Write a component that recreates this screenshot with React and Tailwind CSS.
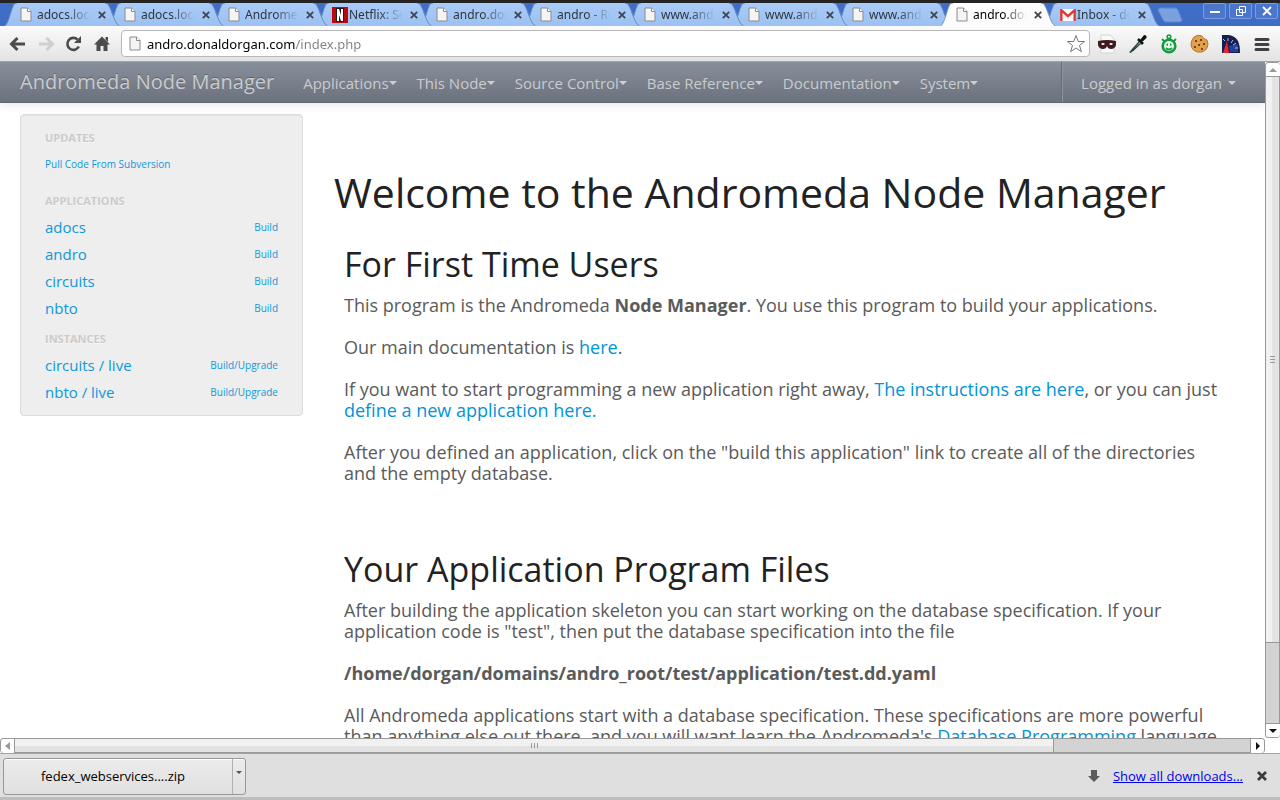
const tabs = [
  { title: 'adocs.localhost', icon: 'page', z: 'z-[11]' },
  { title: 'adocs.localhost', icon: 'page', z: 'z-[10]' },
  { title: 'Andromeda Node', icon: 'page', z: 'z-[9]' },
  { title: 'Netflix: Search', icon: 'netflix', z: 'z-[8]' },
  { title: 'andro.donaldorgan', icon: 'page', z: 'z-[7]' },
  { title: 'andro - Redmine', icon: 'page', z: 'z-[6]' },
  { title: 'www.andromeda', icon: 'page', z: 'z-[5]' },
  { title: 'www.andromeda', icon: 'page', z: 'z-[4]' },
  { title: 'www.andromeda', icon: 'page', z: 'z-[3]' },
  { title: 'andro.donaldorgan', icon: 'page', z: 'z-[12]', active: true },
  { title: 'Inbox - dorgan', icon: 'gmail', z: 'z-[2]' },
];

const menus = ['Applications', 'This Node', 'Source Control', 'Base Reference', 'Documentation', 'System'];
const applications = ['adocs', 'andro', 'circuits', 'nbto'];
const instances = ['circuits / live', 'nbto / live'];

function PageIcon({ className }) {
  return (
    <svg viewBox="0 0 12 15" className={className} aria-hidden="true">
      <path d="M1 1h6.5L11 4.5V14H1z" fill="#f4f4f4" stroke="#8b8b8b" />
      <path d="M7.5 1v3.5H11" fill="#fff" stroke="#8b8b8b" />
    </svg>
  );
}

function TabIcon({ name }) {
  if (name === 'netflix') {
    return (
      <svg viewBox="0 0 16 16" className="h-4 w-4 shrink-0" aria-hidden="true">
        <path d="M0 0h16v16H0z" fill="#b9090b" />
        <path d="M4 1h8v14H4z" fill="#221c1c" />
        <path d="M5 2h2l2 6V2h2v12H9L7 8v6H5z" fill="#fff" />
      </svg>
    );
  }
  if (name === 'gmail') {
    return (
      <svg viewBox="0 0 16 12" className="h-3 w-4 shrink-0" aria-hidden="true">
        <path d="M0 0h16v12H0z" fill="#fafafa" />
        <path d="M3 10l4-4M13 10L9 6" stroke="#ddd" fill="none" />
        <path d="M1.3 12V1.2L8 7.2l6.700-6V12" fill="none" stroke="#db3a34" strokeWidth="2.400" />
      </svg>
    );
  }
  return <PageIcon className="mr-1 h-[15px] w-3 shrink-0" />;
}

function Cross({ className }) {
  return (
    <svg viewBox="0 0 8 8" className={className} aria-hidden="true">
      <path d="M.8.8l6.400 6.400M7.200.8L.8 7.200" stroke="#3f444c" strokeWidth="1.800" />
    </svg>
  );
}

function Tab({ tab }) {
  return (
    <div className={`relative flex h-full w-[104px] shrink-0 items-center pl-[15px] ${tab.z}`}>
      <svg viewBox="0 0 120 24" className="absolute top-0 -left-[3px] h-full w-[120px]" aria-hidden="true">
        <path
          d="M0 24C4 22 6 10 9 3Q10 0 13 0H105Q108 0 109 3C113 10 115 22 120 24z"
          fill={tab.active ? '#fcfcfc' : 'url(#tabfill)'}
        />
        <path
          d="M0 24C4 22 6 10 9 3Q10 0 13 0M105 0Q108 0 109 3C113 10 115 22 120 24"
          fill="none"
          stroke={tab.active ? '#7d93b8' : '#6687b8'}
        />
      </svg>
      <button type="button" className="relative flex min-w-0 items-center gap-px">
        <TabIcon name={tab.icon} />
        <span className={`block w-[54px] overflow-hidden text-left text-[12px] leading-4 whitespace-nowrap [mask-image:linear-gradient(to_right,#000_55%,transparent)] ${tab.active ? 'text-black' : 'text-[#30353d]'}`}>
          {tab.title}
        </span>
      </button>
      <button type="button" aria-label="Close tab" className="relative ml-[7px] shrink-0">
        <Cross className="h-2 w-2" />
      </button>
    </div>
  );
}

function WindowButton({ label, children }) {
  return (
    <button type="button" aria-label={label} className="flex h-4 w-[23px] items-center justify-center rounded-[2px] border border-[#7c9be0] bg-[#4a76cc]">
      <svg viewBox="0 0 12 12" className="h-3 w-3" fill="none" stroke="#fff" aria-hidden="true">
        {children}
      </svg>
    </button>
  );
}

function TabStrip() {
  return (
    <div className="flex h-[26px] shrink-0 items-stretch border-t-[3px] border-[#242424] bg-gradient-to-b from-[#3f6fca] to-[#3f6cc4] pl-[5px]">
      <svg className="absolute h-0 w-0" aria-hidden="true">
        <linearGradient id="tabfill" x1="0" y1="0" x2="0" y2="1">
          <stop offset="0" stopColor="#a9cbf8" />
          <stop offset="1" stopColor="#9bc1f2" />
        </linearGradient>
      </svg>
      <div className="flex">
        {tabs.map((tab, i) => (
          <Tab key={i} tab={tab} />
        ))}
      </div>
      <button type="button" aria-label="New tab" className="ml-2 self-center">
        <svg viewBox="0 0 26 16" className="h-4 w-[26px]" aria-hidden="true">
          <path d="M3 1H18Q20 1 21 3L25 13Q25 15 23 15H9Q7 15 6 13L1 3Q1 1 3 1z" fill="#7ba0df" stroke="#5c84cc" />
        </svg>
      </button>
      <div className="ml-auto flex gap-[3px] pr-[2px]">
        <WindowButton label="Minimize"><path d="M1 7h10" strokeWidth="2" /></WindowButton>
        <WindowButton label="Restore"><path d="M4.500 1.500h6v6h-6zM1.500 4.500h6v6h-6z" /></WindowButton>
        <WindowButton label="Close"><path d="M2 2l8 8M10 2l-8 8" strokeWidth="1.800" /></WindowButton>
      </div>
    </div>
  );
}

function ToolButton({ label, className = 'h-5 w-5', viewBox = '0 0 20 20', children }) {
  return (
    <button type="button" aria-label={label} className="shrink-0">
      <svg viewBox={viewBox} className={className} aria-hidden="true">{children}</svg>
    </button>
  );
}

function Toolbar() {
  return (
    <div className="flex h-9 shrink-0 items-center border-b border-[#a3a3a3] bg-gradient-to-b from-[#fbfbfb] to-[#e3e3e3] pr-2 pl-2">
      <div className="flex gap-2">
        <ToolButton label="Back">
          <path d="M17 10H5M9.500 4L3.500 10l6 6" fill="none" stroke="#4b4b4b" strokeWidth="3" />
        </ToolButton>
        <ToolButton label="Forward">
          <path d="M3 10h12M10.500 4l6 6-6 6" fill="none" stroke="#cfcfcf" strokeWidth="3" />
        </ToolButton>
        <ToolButton label="Reload">
          <path d="M14.800 12.500A6 6 0 1 1 13.500 5.500" fill="none" stroke="#4b4b4b" strokeWidth="2.600" />
          <path d="M17 2v7h-7z" fill="#4b4b4b" />
        </ToolButton>
        <ToolButton label="Home">
          <path d="M10 2.500l8 8h-2.500V17h-4v-5h-3v5h-4v-6.500H2zM13.500 3h2.500v5l-2.500-2.500z" fill="#4b4b4b" />
        </ToolButton>
      </div>
      <div className="ml-[9px] flex h-[27px] min-w-0 flex-1 items-center rounded-[4px] border border-[#b9b9b9] bg-white pr-[3px] pl-[7px]">
        <PageIcon className="h-[15px] w-3 shrink-0" />
        <input
          type="text"
          aria-label="Address"
          defaultValue="andro.donaldorgan.com/index.php"
          className="ml-[6px] min-w-0 flex-1 bg-[linear-gradient(to_right,#000_148px,#808080_148px)] bg-clip-text text-[13px] leading-5 text-transparent outline-none"
        />
        <ToolButton label="Bookmark this page">
          <path d="M10 1.500l2.200 6h6.300l-5 3.900 1.900 6.300L10 14l-5.400 3.700 1.900-6.300-5-3.900h6.300z" fill="#fff" stroke="#777" strokeLinejoin="round" />
        </ToolButton>
      </div>
      <div className="ml-[7px] flex gap-[11px]">
        <ToolButton label="Private mode">
          <path d="M4 1h9l4 4v14H4z" fill="#fafafa" stroke="#d5d5d5" />
          <path d="M1 7q9-2 18 0v4q-1 4-5 4-3 0-4-3-1 3-4 3-4 0-5-4z" fill="#3e1b1e" />
          <path d="M4 10q2-2 4 0-2 2-4 0M12 10q2-2 4 0-2 2-4 0" fill="#fff" />
        </ToolButton>
        <ToolButton label="Eyedropper">
          <path d="M11 8L4 16l-1.500 2L5 16.500 12.500 9.500" fill="#bcd4cb" stroke="#2d3d36" strokeWidth="1.200" />
          <path d="M10 5l5 5M12.500 7.500L16 4" stroke="#111" strokeWidth="2.600" />
          <path d="M13 5l3-4q3 0 2.500 3L15 7z" fill="#111" />
          <path d="M2 16l1.500 3h-2z" fill="#156c36" />
        </ToolButton>
        <ToolButton label="Session timer">
          <circle cx="10" cy="2.800" r="1.800" fill="none" stroke="#159b3e" strokeWidth="1.600" />
          <circle cx="10" cy="12" r="6.300" fill="#e8f7ea" stroke="#159b3e" strokeWidth="2.600" />
          <path d="M3 5l3 3M17 5l-3 3M7 14q3 3 6 0" stroke="#159b3e" strokeWidth="1.800" fill="none" />
          <path d="M7 11l2-2v3zM13 11l-2-2v3z" fill="#159b3e" />
        </ToolButton>
        <ToolButton label="Cookies">
          <path d="M4 3q4-3 8-1 1 3 5 4 2 4 0 8-3 5-9 4-6-1-7-7 0-5 3-8z" fill="#e3a04c" stroke="#b9752c" />
          <path d="M5 6h2v2H5zM10 5h2v2h-2zM13 9h2v2h-2zM8 10h2v2H8zM4 12h2v2H4zM11 14h2v2h-2z" fill="#774218" />
        </ToolButton>
        <ToolButton label="Speed">
          <path d="M1 1h7q6 1 9 6 2 4 2 12H1z" fill="#171d4f" />
          <path d="M8 12l9-2v8H9z" fill="#22409a" />
          <path d="M2 5l2 2M7 4v3M12 6l-2 3M15 9l-3 2M17 14h-3" fill="none" stroke="#b3bddf" />
          <path d="M6 7l1 6 1 6H2z" fill="#e3262d" />
        </ToolButton>
        <ToolButton label="Menu">
          <path d="M4 5.500h12M4 10.500h12M4 15.500h12" stroke="#414141" strokeWidth="3" strokeLinecap="round" />
        </ToolButton>
      </div>
    </div>
  );
}

function Caret() {
  return <span className="h-0 w-0 border-x-4 border-t-4 border-x-transparent border-t-[#cfcfcf]" />;
}

function Navbar() {
  return (
    <header className="relative flex h-[41px] shrink-0 items-stretch border-b border-[#626873] bg-gradient-to-b from-[#88909b] to-[#6b717d] pl-5 text-[15px] leading-5 text-[#c9cbcd] shadow-[0_1px_10px_rgba(0,0,0,0.12)] [text-shadow:0_-1px_0_rgba(0,0,0,0.25)]">
      <a href="#home" className="mr-[19px] flex items-center text-[20px]">Andromeda Node Manager</a>
      <nav className="flex">
        {menus.map((label) => (
          <button key={label} type="button" className="flex items-center px-[10px] pt-[2px]">
            {label}
            <Caret />
          </button>
        ))}
      </nav>
      <button type="button" className="ml-auto flex items-center gap-[6px] border-l border-[#666c77] pt-[2px] pr-[29px] pl-[19px] shadow-[inset_1px_0_0_#8f96a1]">
        Logged in as dorgan
        <Caret />
      </button>
    </header>
  );
}

function SideHeading({ children }) {
  return <h3 className="text-[11px] leading-[18px] font-bold text-[#cbcbcb] uppercase [text-shadow:0_1px_0_rgba(255,255,255,0.5)]">{children}</h3>;
}

function SideList({ items, action }) {
  return (
    <ul className="mt-[3px]">
      {items.map((item) => (
        <li key={item} className="flex h-[27px] items-center justify-between">
          <a href="#item" className="text-[15px] leading-5">{item}</a>
          <a href="#build" className="text-[10px] leading-5">{action}</a>
        </li>
      ))}
    </ul>
  );
}

function Sidebar() {
  return (
    <aside className="w-[283px] shrink-0 self-start rounded-[4px] border border-[#dcdcdc] bg-[#eee] px-6 pt-[14px] pb-[10px] text-[#0d98dc] shadow-[inset_0_1px_1px_rgba(0,0,0,0.05)]">
      <SideHeading>Updates</SideHeading>
      <p className="mt-2 mb-[19px] text-[10px] leading-[18px]"><a href="#pull">Pull Code From Subversion</a></p>
      <SideHeading>Applications</SideHeading>
      <SideList items={applications} action="Build" />
      <div className="mt-[9px]"><SideHeading>Instances</SideHeading></div>
      <SideList items={instances} action="Build/Upgrade" />
    </aside>
  );
}

function Link({ children }) {
  return <a href="#docs" className="text-[#0094d9]">{children}</a>;
}

function Section({ title, children }) {
  return (
    <section className="pl-[10px]">
      <h2 className="text-[34px] leading-[42px] text-[#222]">{title}</h2>
      <div className="mt-[10px] flex flex-col gap-[21px] text-[18px] leading-[21px]">{children}</div>
    </section>
  );
}

function Main() {
  return (
    <main className="min-w-0 flex-1 pt-[57px] pr-[35px] text-[#5a5a5a]">
      <h1 className="mb-[30px] text-[41px] leading-[42px] text-[#222]">Welcome to the Andromeda Node Manager</h1>
      <div className="flex flex-col gap-16">
        <Section title="For First Time Users">
          <p>This program is the Andromeda <b>Node Manager</b>. You use this program to build your applications.</p>
          <p>Our main documentation is <Link>here</Link>.</p>
          <p>If you want to start programming a new application right away, <Link>The instructions are here</Link>, or you can just <Link>define a new application here.</Link></p>
          <p>After you defined an application, click on the "build this application" link to create all of the directories and the empty database.</p>
        </Section>
        <Section title="Your Application Program Files">
          <p>After building the application skeleton you can start working on the database specification. If your application code is "test", then put the database specification into the file</p>
          <p><b>/home/dorgan/domains/andro_root/test/application/test.dd.yaml</b></p>
          <p>All Andromeda applications start with a database specification. These specifications are more powerful than anything else out there, and you will want learn the Andromeda's <Link>Database Programming</Link> language.</p>
        </Section>
      </div>
    </main>
  );
}

function ScrollArrow({ label, d, className, fill = '#111' }) {
  return (
    <button type="button" aria-label={label} className={`flex h-[14px] w-[14px] shrink-0 items-center justify-center border-[#999] bg-white ${className}`}>
      <svg viewBox="0 0 8 8" className="h-2 w-2" aria-hidden="true"><path d={d} fill={fill} /></svg>
    </button>
  );
}

function VerticalScrollbar() {
  return (
    <div className="flex w-[15px] shrink-0 flex-col rounded-[3px] border border-[#999] bg-[#d3d3d3]">
      <ScrollArrow label="Scroll up" d="M0 6l4-4 4 4z" fill="#999" className="rounded-t-[3px] border-b" />
      <div className="flex w-full flex-[575] flex-col items-center justify-center gap-[2px] border-b border-[#999] bg-gradient-to-r from-[#f1f1f1] from-50% to-[#e3e3e3] to-50%">
        {[0, 1, 2].map((n) => <span key={n} className="h-px w-[5px] bg-[#999]" />)}
      </div>
      <div className="flex-[81]" />
      <ScrollArrow label="Scroll down" d="M0 2h8L4 6z" className="rounded-b-[3px] border-t" />
    </div>
  );
}

function HorizontalScrollbar() {
  return (
    <div className="flex h-[15px] shrink-0 bg-white pr-[15px]">
      <div className="flex flex-1 rounded-[3px] border border-[#999] bg-[#d3d3d3]">
        <ScrollArrow label="Scroll left" d="M6 0v8L1 4z" fill="#999" className="rounded-l-[3px] border-r" />
        <div className="flex flex-[1040] items-center justify-center gap-[2px] border-r border-[#999] bg-gradient-to-b from-[#f1f1f1] from-50% to-[#e3e3e3] to-50%">
          {[0, 1, 2].map((n) => <span key={n} className="h-[5px] w-px bg-[#999]" />)}
        </div>
        <div className="flex-[196]" />
        <ScrollArrow label="Scroll right" d="M2 0l4 4-4 4z" className="rounded-r-[3px] border-l" />
      </div>
    </div>
  );
}

function DownloadBar() {
  return (
    <footer className="flex h-[47px] shrink-0 items-center border-t border-b-[3px] border-t-[#a3a3a3] border-b-[#bdbdbd] bg-[#dfdfdf] pt-px pr-[13px] pl-[3px] text-[13px] leading-4 text-black">
      <div className="flex h-[37px] rounded-[3px] border border-[#989898] bg-gradient-to-b from-[#ececec] to-[#e0e0e0] shadow-[inset_0_1px_0_#fff]">
        <button type="button" className="w-[228px] pr-[10px] text-center">fedex_webservices....zip</button>
        <button type="button" aria-label="Download options" className="flex w-[13px] justify-center border-l border-[#b0b0b0] pt-3">
          <span className="h-0 w-0 border-x-[3px] border-t-[3px] border-x-transparent border-t-[#555]" />
        </button>
      </div>
      <svg viewBox="0 0 12 12" className="ml-auto h-3 w-3" aria-hidden="true">
        <path d="M3 0h6v6h3l-6 6-6-6h3z" fill="#5c5c5c" />
      </svg>
      <a href="#downloads" className="ml-[13px] text-[#0000ee] underline">Show all downloads...</a>
      <button type="button" aria-label="Close downloads bar" className="ml-[14px]">
        <svg viewBox="0 0 10 10" className="h-[10px] w-[10px]" aria-hidden="true">
          <path d="M1 1l8 8M9 1L1 9" stroke="#3c3c3c" strokeWidth="2.800" />
        </svg>
      </button>
    </footer>
  );
}

export default function App() {
  return (
    <div className="flex h-screen flex-col overflow-hidden bg-white font-['Open_Sans','Noto_Sans',sans-serif]">
      <div className="flex shrink-0 flex-col font-['Noto_Sans','Open_Sans',sans-serif]">
        <TabStrip />
        <Toolbar />
      </div>
      <div className="flex min-h-0 flex-1">
        <div className="flex min-w-0 flex-1 flex-col overflow-hidden">
          <Navbar />
          <div className="flex gap-[31px] pt-[11px] pl-5">
            <Sidebar />
            <Main />
          </div>
        </div>
        <VerticalScrollbar />
      </div>
      <HorizontalScrollbar />
      <DownloadBar />
    </div>
  );
}
